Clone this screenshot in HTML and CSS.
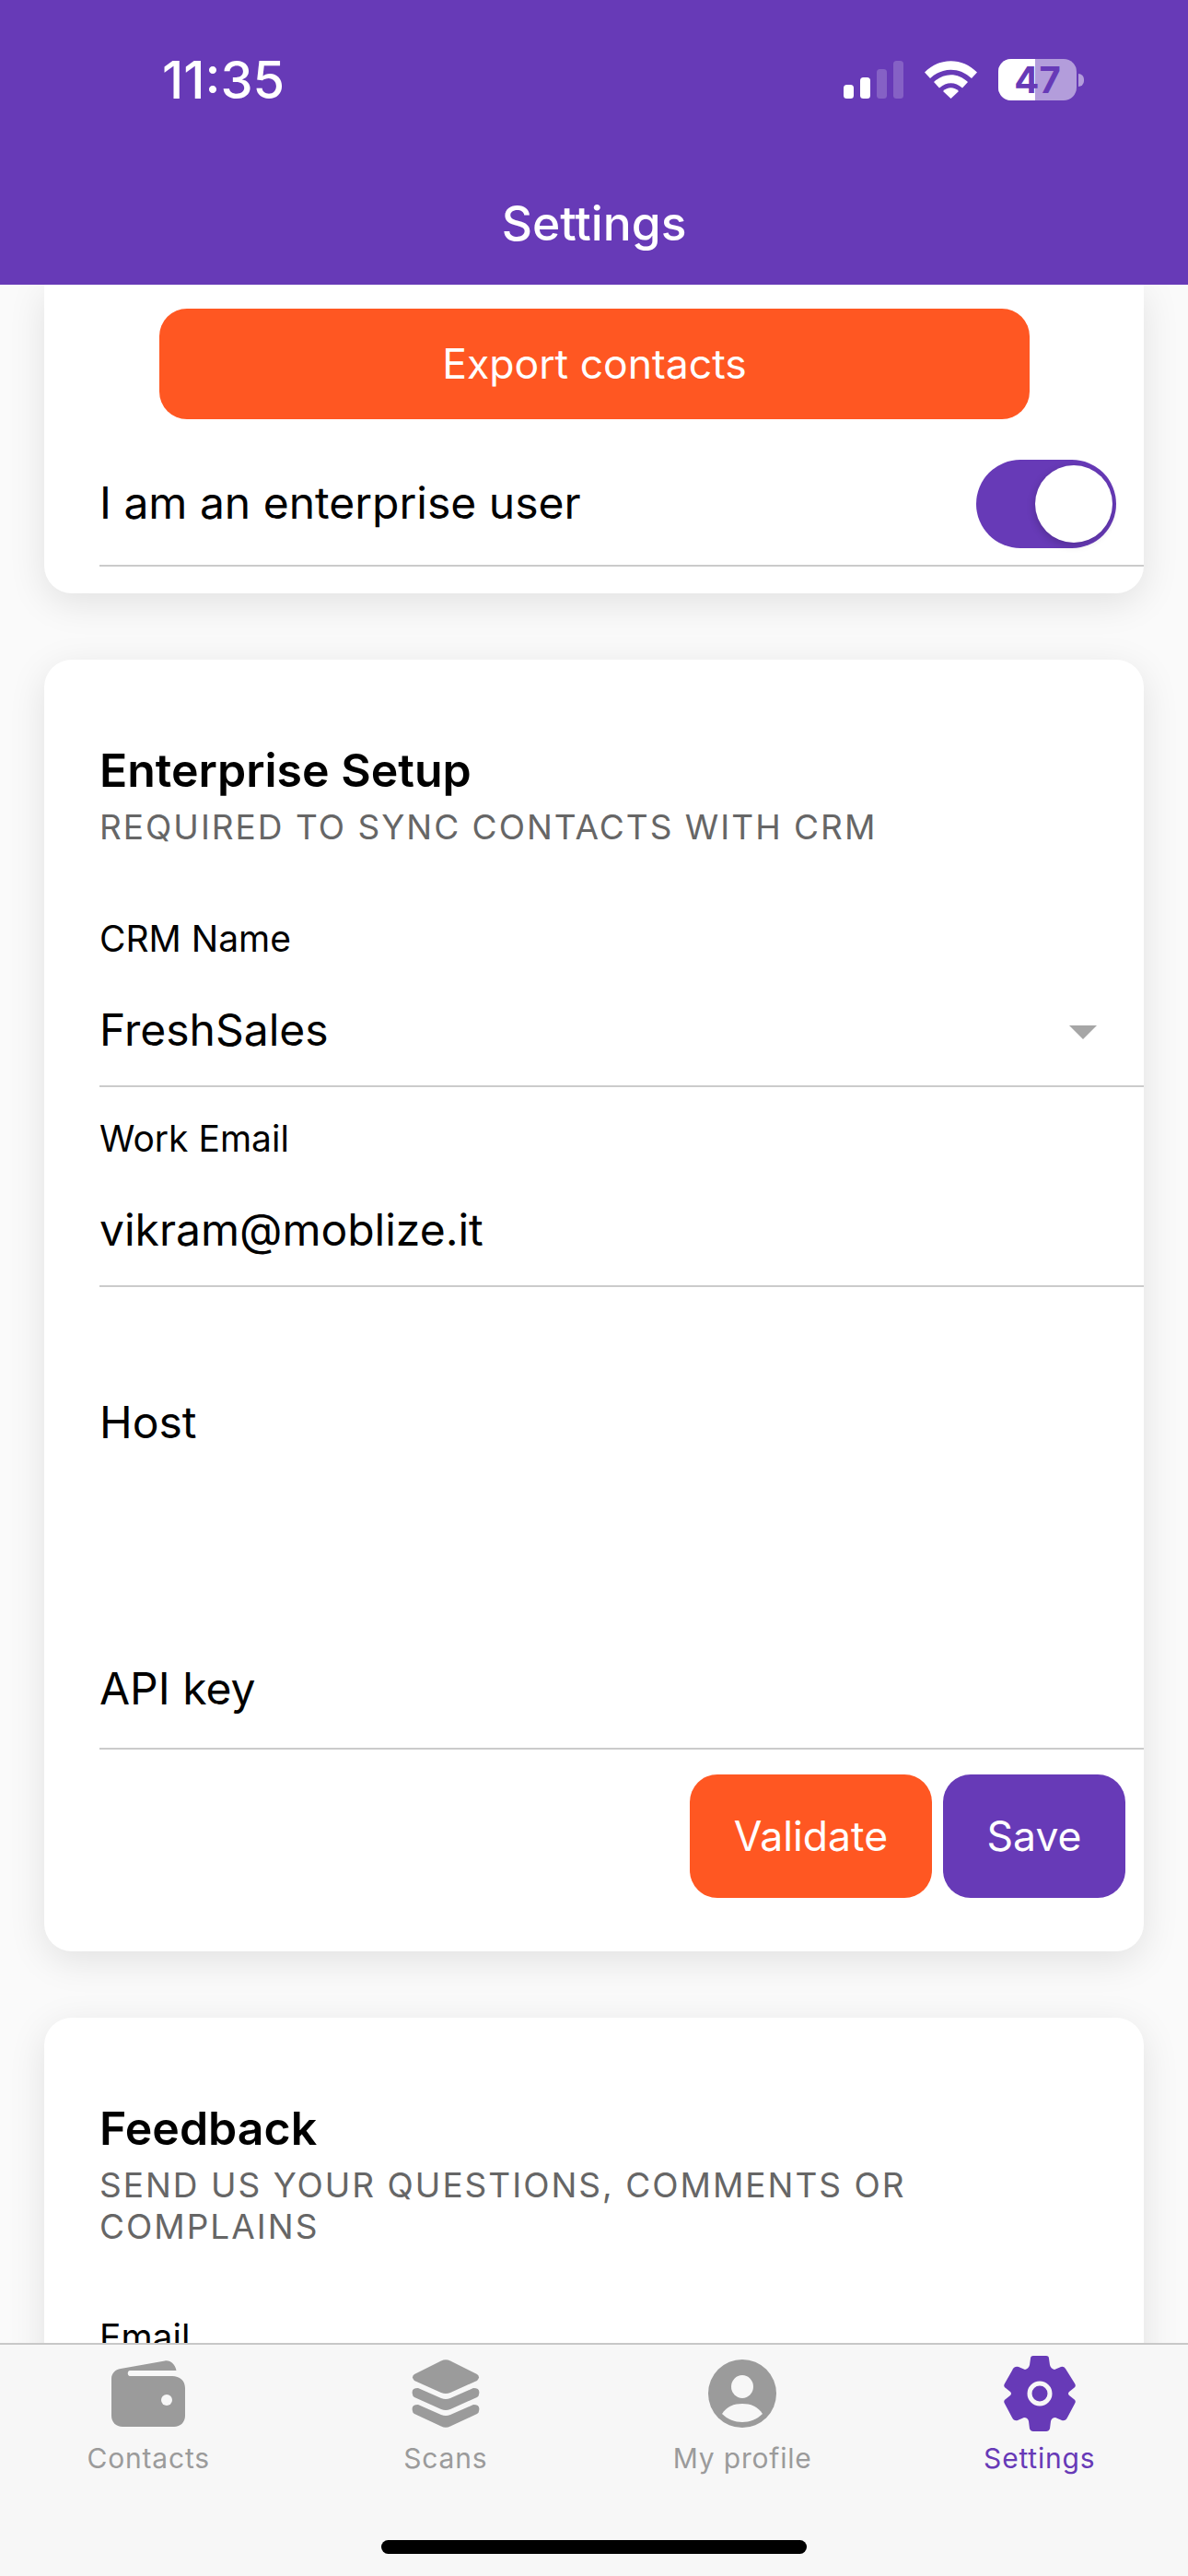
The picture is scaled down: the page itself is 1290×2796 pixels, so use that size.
FILE: index.html
```html
<!DOCTYPE html>
<html lang="en">
<head>
<meta charset="utf-8">
<title>Settings</title>
<link rel="stylesheet" href="styles.css">
</head>
<body>
<div class="app">
  <header class="header">
    <div class="status">
      <span class="time">11:35</span>
      <div class="status-icons">
        <svg class="signal" width="65" height="41" viewBox="0 0 65 41"><rect x="0" y="26" width="11" height="15" rx="3.500" fill="#fff"/><rect x="18" y="18" width="11" height="23" rx="3.500" fill="#fff"/><rect x="36" y="9" width="11" height="32" rx="3.500" fill="#fff" opacity=".2"/><rect x="54" y="0" width="11" height="41" rx="3.500" fill="#fff" opacity=".2"/></svg>
        <svg class="wifi" width="57" height="41" viewBox="0 0 57 41"><path d="M0 12.500 C16 -4 41 -4 57 12.500 L51 19 C38 6.500 19 6.500 6 19 Z" fill="#fff"/><path d="M10 23 C21 12.500 36 12.500 47 23 L41 29.500 C33 22.500 24 22.500 16 29.500 Z" fill="#fff"/><path d="M20 33 C25 28 32 28 37 33 L28.500 41 Z" fill="#fff"/></svg>
        <div class="battery"><div class="battery-body"><div class="battery-fill"></div><span class="battery-num">47</span></div><span class="battery-cap"></span></div>
      </div>
    </div>
    <h1 class="title">Settings</h1>
  </header>
  <main class="scroll">
    <section class="card card-first">
      <button class="btn btn-export">Export contacts</button>
      <div class="toggle-row">
        <span class="toggle-label">I am an enterprise user</span>
        <span class="toggle"><span class="thumb"></span></span>
      </div>
    </section>
    <section class="card card-setup">
      <h2 class="card-title">Enterprise Setup</h2>
      <p class="card-sub">REQUIRED TO SYNC CONTACTS WITH CRM</p>
      <div class="field field-crm">
        <label class="field-label">CRM Name</label>
        <div class="field-value">FreshSales<span class="caret"></span></div>
      </div>
      <div class="field field-email">
        <label class="field-label">Work Email</label>
        <div class="field-value">vikram@moblize.it</div>
      </div>
      <div class="field-plain field-host">Host</div>
      <div class="field-plain field-api">API key</div>
      <div class="actions">
        <button class="btn btn-validate">Validate</button>
        <button class="btn btn-save">Save</button>
      </div>
    </section>
    <section class="card card-feedback">
      <h2 class="card-title">Feedback</h2>
      <p class="card-sub">SEND US YOUR QUESTIONS, COMMENTS OR COMPLAINS</p>
      <label class="field-label feedback-label">Email</label>
    </section>
  </main>
  <nav class="tabs">
    <div class="tab">
      <svg class="tab-icon" width="80" height="72" viewBox="0 0 80 72"><path d="M10 9 L58 0.5 C64 -0.5 69 4 70.500 11 L20 11 C17 11 17 17 20 17 L66 17 C74 17 80 22 80 30 L80 60 C80 67 75 72 68 72 L12 72 C5 72 0 67 0 60 L0 20 C0 14 4 10 10 9 Z" fill="#9b9b9b"/><ellipse cx="60" cy="43" rx="6" ry="6" fill="#f7f7f7"/></svg>
      <span class="tab-label">Contacts</span>
    </div>
    <div class="tab">
      <svg class="tab-icon" width="74" height="74" viewBox="0 0 74 74"><path d="M32 1.500 Q37 -1 42 1.500 L71 16 Q75 19 71 23 L42 36 Q37 38 32 36 L3 23 Q-1 19 3 16 Z" fill="#9b9b9b"/><path d="M7 31 L32 42 Q37 44 42 42 L67 31 Q75 31 73 38 Q73 40 71 41 L42 54 Q37 56 32 54 L3 41 Q1 40 1 38 Q-1 31 7 31 Z" fill="#9b9b9b"/><path d="M7 49 L32 60 Q37 62 42 60 L67 49 Q75 49 73 56 Q73 58 71 59 L42 72.500 Q37 75 32 72.500 L3 59 Q1 58 1 56 Q-1 49 7 49 Z" fill="#9b9b9b"/></svg>
      <span class="tab-label">Scans</span>
    </div>
    <div class="tab">
      <svg class="tab-icon" width="74" height="74" viewBox="0 0 74 74"><circle cx="37" cy="37" r="37" fill="#9b9b9b"/><ellipse cx="37" cy="29.500" rx="12" ry="12.500" fill="#f7f7f7"/><path d="M15 59 C20 51 28 48 37 48 C46 48 54 51 59 59 C53 65 45 68 37 68 C29 68 21 65 15 59 Z" fill="#f7f7f7"/></svg>
      <span class="tab-label">My profile</span>
    </div>
    <div class="tab tab-active">
      <svg class="tab-icon gear" width="80" height="82" viewBox="0 0 80 82"><path d="M30 3 Q30 0 33 0 L47 0 Q50 0 50 3 L51 10 Q52 14 56 15 L63 12 Q66 11 68 14 L78 30 Q80 33 77 35 L72 39 Q70 41 72 43 L77 47 Q80 49 78 52 L70 67 Q68 71 64 70 L57 67 Q53 67 52 71 L51 79 Q50 82 47 82 L33 82 Q30 82 29 79 L28 71 Q27 67 23 67 L16 70 Q12 71 10 67 L2 52 Q0 49 3 47 L8 43 Q10 41 8 39 L3 35 Q0 33 2 30 L10 16 Q12 11 17 12 L24 15 Q28 14 29 10 Z" fill="#673ab7"/><circle cx="40" cy="41" r="11" fill="none" stroke="#f7f7f7" stroke-width="5"/></svg>
      <span class="tab-label">Settings</span>
    </div>
    <span class="home-bar"></span>
  </nav>
</div>
</body>
</html>
```
FILE: styles.css
```css
* { box-sizing: border-box; }
html, body { margin: 0; padding: 0; }
body { width: 1290px; height: 2796px; overflow: hidden; background: #fafafa; font-family: Inter, "Liberation Sans", sans-serif; color: #000; }
.app { display: flex; flex-direction: column; height: 2796px; }

.header { height: 309px; flex: none; background: #673ab7; color: #fff; display: flex; flex-direction: column; }
.status { height: 207px; flex: none; padding: 56px 113px 0 176px; display: flex; justify-content: space-between; align-items: flex-start; }
.time { font-size: 56px; font-weight: 500; line-height: 62px; }
.status-icons { display: flex; align-items: center; gap: 23px; padding-top: 8px; }
.wifi, .signal { display: block; }
.battery { display: flex; align-items: center; gap: 2px; }
.battery-body { position: relative; width: 85px; height: 45px; border-radius: 14px; background: rgba(255,255,255,.5); display: flex; align-items: center; justify-content: center; }
.battery-fill { position: absolute; left: 0; top: 0; bottom: 0; width: 40px; border-radius: 14px 0 0 14px; background: #fff; }
.battery-num { position: relative; color: #673ab7; font-size: 40px; font-weight: 700; line-height: 1; }
.battery-cap { width: 6px; height: 14px; background: rgba(255,255,255,.5); border-radius: 0 7px 7px 0; }
.title { margin: 0; text-align: center; font-size: 51.500px; font-weight: 500; line-height: 70px; }

.scroll { flex: 1; min-height: 0; overflow: hidden; padding: 0 48px; }
.card { background: #fff; border-radius: 30px; box-shadow: 0 10px 40px rgba(0,0,0,.1); padding: 0 0 0 60px; }
.card-first { height: 335px; border-radius: 0 0 30px 30px; padding-top: 26px; }
.card-setup { margin-top: 72px; height: 1402px; padding-top: 89px; }
.card-feedback { margin-top: 72px; height: 500px; padding-top: 89px; }

.btn { border: 0; color: #fff; font-family: inherit; font-size: 44.500px; border-radius: 30px; padding: 0; display: block; }
.btn-export { width: 945px; height: 120px; margin-left: 65px; background: #ff5722; }
.toggle-row { margin-top: 45px; height: 115px; padding: 0 30px 19px 0; border-bottom: 2px solid #cbcbcb; display: flex; align-items: center; justify-content: space-between; }
.toggle-label { font-size: 48px; line-height: 58px; margin-top: -3px; }
.toggle { width: 152px; height: 96px; border-radius: 48px; background: #673ab7; padding: 6px 4px; display: flex; justify-content: flex-end; }
.thumb { width: 84px; height: 84px; border-radius: 50%; background: #fff; box-shadow: -1px 3px 8px rgba(0,0,0,.18); }

.card-title { margin: 0; font-size: 50px; font-weight: 600; line-height: 62px; }
.card-sub { margin: 8px 0 0; max-width: 1040px; font-size: 37px; line-height: 45px; letter-spacing: 2px; color: #666; }
.field { border-bottom: 2px solid #cbcbcb; }
.field-label { display: block; font-size: 39px; line-height: 50px; }
.field-value { font-size: 48px; line-height: 60px; margin-top: 44px; display: flex; justify-content: space-between; align-items: center; }
.field-crm { margin-top: 74px; padding-bottom: 30px; }
.field-email { padding: 31px 0 30px; }
.caret { width: 0; height: 0; margin: 5px 51px 0 0; border-left: 15px solid transparent; border-right: 15px solid transparent; border-top: 15px solid #a6a6a6; }
.field-plain { font-size: 48px; line-height: 60px; }
.field-host { margin-top: 117px; }
.field-api { margin-top: 229px; padding-bottom: 34px; border-bottom: 2px solid #cbcbcb; }
.actions { margin: 27px 0 0 -60px; display: flex; justify-content: flex-end; gap: 12px; padding-right: 20px; }
.btn-validate { width: 263px; height: 134px; background: #ff5722; }
.btn-save { width: 198px; height: 134px; background: #673ab7; }
.feedback-label { margin-top: 73px; }

.tabs { position: relative; height: 253px; flex: none; background: #f7f7f7; border-top: 2px solid #c8c8c8; display: flex; }
.tab { flex: 0 0 322.500px; display: flex; flex-direction: column; align-items: center; padding-top: 16px; color: #9b9b9b; }
.tab-icon { display: block; height: 74px; }
.tab-label { font-size: 30px; line-height: 40px; letter-spacing: .8px; margin-top: 13px; }
.tab-active { color: #673ab7; }
.gear { height: 82px; margin-top: -4px; margin-bottom: -4px; }
.home-bar { position: absolute; left: 414px; top: 212px; width: 462px; height: 15px; border-radius: 8px; background: #000; }
```
